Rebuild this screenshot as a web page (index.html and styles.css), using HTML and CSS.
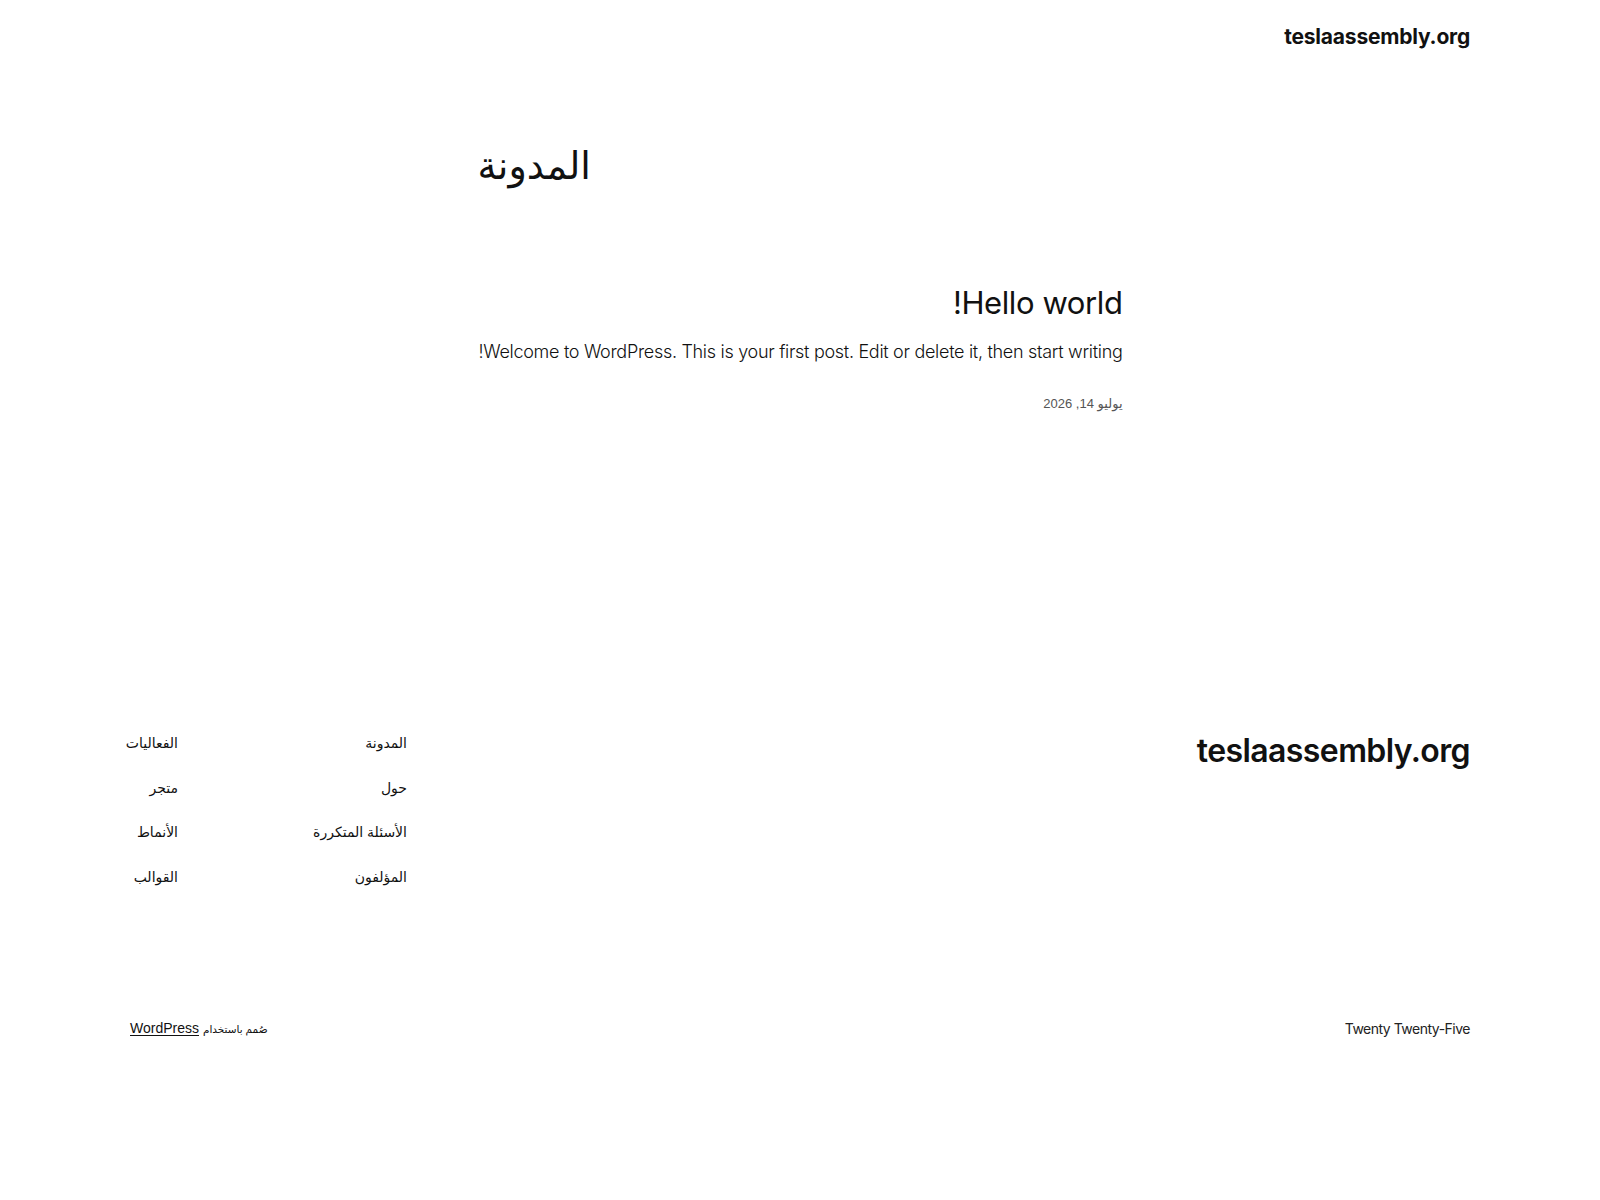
FILE: index.html
```html
<!DOCTYPE html>
<html lang="ar" dir="rtl">
<head>
<meta charset="utf-8">
<title>المدونة – teslaassembly.org</title>
<link rel="stylesheet" href="styles.css">
</head>
<body>
<div class="site">
  <header class="site-header">
    <a class="site-title" href="#">teslaassembly.org</a>
  </header>

  <main class="site-main">
    <h1 class="page-title">المدونة</h1>
    <article class="post">
      <h2 class="post-title"><a href="#">Hello world!</a></h2>
      <p class="post-excerpt">Welcome to WordPress. This is your first post. Edit or delete it, then start writing!</p>
      <div class="post-date">يوليو 14, 2026</div>
    </article>
  </main>

  <footer class="site-footer">
    <div class="footer-top">
      <a class="footer-title" href="#">teslaassembly.org</a>
      <nav class="footer-nav">
        <ul class="nav-col">
          <li><a href="#">المدونة</a></li>
          <li><a href="#">حول</a></li>
          <li><a href="#">الأسئلة المتكررة</a></li>
          <li><a href="#">المؤلفون</a></li>
        </ul>
        <ul class="nav-col">
          <li><a href="#">الفعاليات</a></li>
          <li><a href="#">متجر</a></li>
          <li><a href="#">الأنماط</a></li>
          <li><a href="#">القوالب</a></li>
        </ul>
      </nav>
    </div>
    <div class="footer-bottom">
      <span class="theme-name">Twenty Twenty-Five</span>
      <span class="credit"><span class="credit-ar">صُمم باستخدام</span> <a href="#">WordPress</a></span>
    </div>
  </footer>
</div>
</body>
</html>
```

FILE: styles.css
```css
* { box-sizing: border-box; }
html, body { margin: 0; padding: 0; background: #fff; }
body {
  color: #111;
  font-family: Inter, "Liberation Sans", "DejaVu Sans", sans-serif;
}
a { color: inherit; text-decoration: none; }

.site {
  width: 1340px;
  margin: 0 auto;
}

/* header */
.site-header {
  display: flex;
  justify-content: flex-start;
  padding-top: 22px;
  height: 138px;
}
.site-title {
  font-size: 21px;
  font-weight: 700;
  line-height: 1.4;
  letter-spacing: -0.2px;
}

/* main */
.site-main {
  width: 645px;
  margin: 0 auto;
  min-height: 594px;
}
.page-title {
  margin: 0;
  font-family: "DejaVu Sans", sans-serif;
  font-weight: 400;
  font-size: 38px;
  line-height: 1.5;
  text-align: left;
}
.post {
  margin-top: 89px;
  text-align: right;
}
.post-title {
  margin: 0;
  font-size: 31px;
  font-weight: 400;
  line-height: 1.2;
  letter-spacing: -0.4px;
}
.post-excerpt {
  margin: 17px 0 0;
  font-size: 18px;
  font-weight: 300;
  line-height: 1.6;
  letter-spacing: -0.3px;
}
.post-date {
  margin-top: 29px;
  font-size: 13px;
  color: #555;
  font-family: "Liberation Sans", "DejaVu Sans", sans-serif;
}

/* footer */
.site-footer {
  padding-bottom: 140px;
}
.footer-top {
  display: flex;
  justify-content: space-between;
  align-items: flex-start;
}
.footer-title {
  font-size: 32px;
  font-weight: 600;
  line-height: 1.2;
  letter-spacing: -0.6px;
  margin-top: 0;
}
.footer-nav {
  display: grid;
  grid-template-columns: 229px 48px;
  font-family: "Liberation Sans", "DejaVu Sans", sans-serif;
  font-size: 14px;
  margin-top: 0;
}
.nav-col {
  list-style: none;
  margin: 0;
  padding: 0;
  display: flex;
  flex-direction: column;
  gap: 22.6px;
}
.nav-col li { line-height: 22px; white-space: nowrap; }

.footer-bottom {
  display: flex;
  justify-content: space-between;
  margin-top: 130px;
  font-size: 14px;
  line-height: 1.5;
}
.theme-name {
  color: #222;
  letter-spacing: -0.5px;
}
.credit {
  font-family: "Liberation Sans", "DejaVu Sans", sans-serif;
}
.credit-ar { font-size: 10.5px; }
.credit a { text-decoration: underline; text-underline-offset: 2px; }
```
